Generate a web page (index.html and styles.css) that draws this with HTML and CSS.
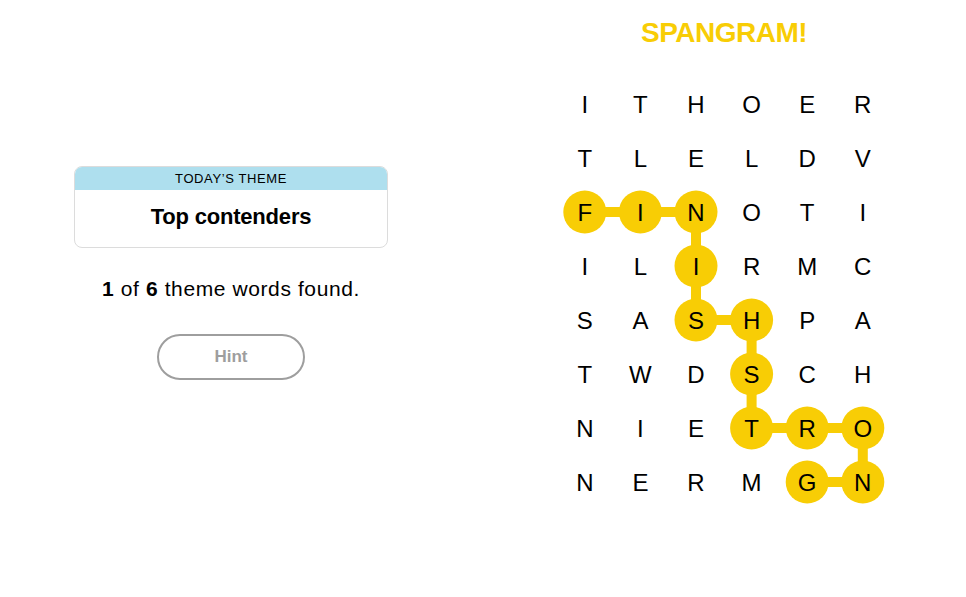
FILE: index.html
```html
<!DOCTYPE html>
<html>
<head>
<meta charset="utf-8">
<link rel="stylesheet" href="styles.css">
</head>
<body>
<div class="page">
  <section class="left">
    <div class="theme-card">
      <div class="theme-head">TODAY’S THEME</div>
      <div class="theme-body">Top contenders</div>
    </div>
    <p class="progress"><b>1</b> of <b>6</b> theme words found.</p>
    <button class="hint">Hint</button>
  </section>
  <section class="right">
    <div class="banner">SPANGRAM!</div>
    <div class="board">
      <svg class="paths" width="334" height="432" viewBox="0 0 334 432">
        <g stroke="#f8cd05" stroke-width="10" fill="none" stroke-linejoin="round">
          <polyline points="27.8,135 83.4,135 139,135 139,189 139,243 194.6,243 194.6,297 194.6,351 250.2,351 305.8,351 305.8,405 250.2,405"/>
        </g>
        <g fill="#f8cd05">
          <circle cx="27.8" cy="135" r="21.5"/>
          <circle cx="83.4" cy="135" r="21.5"/>
          <circle cx="139" cy="135" r="21.5"/>
          <circle cx="139" cy="189" r="21.5"/>
          <circle cx="139" cy="243" r="21.5"/>
          <circle cx="194.6" cy="243" r="21.5"/>
          <circle cx="194.6" cy="297" r="21.5"/>
          <circle cx="194.6" cy="351" r="21.5"/>
          <circle cx="250.2" cy="351" r="21.5"/>
          <circle cx="305.8" cy="351" r="21.5"/>
          <circle cx="305.8" cy="405" r="21.5"/>
          <circle cx="250.2" cy="405" r="21.5"/>
        </g>
      </svg>
      <div class="grid">
        <span>I</span><span>T</span><span>H</span><span>O</span><span>E</span><span>R</span>
        <span>T</span><span>L</span><span>E</span><span>L</span><span>D</span><span>V</span>
        <span>F</span><span>I</span><span>N</span><span>O</span><span>T</span><span>I</span>
        <span>I</span><span>L</span><span>I</span><span>R</span><span>M</span><span>C</span>
        <span>S</span><span>A</span><span>S</span><span>H</span><span>P</span><span>A</span>
        <span>T</span><span>W</span><span>D</span><span>S</span><span>C</span><span>H</span>
        <span>N</span><span>I</span><span>E</span><span>T</span><span>R</span><span>O</span>
        <span>N</span><span>E</span><span>R</span><span>M</span><span>G</span><span>N</span>
      </div>
    </div>
  </section>
</div>
</body>
</html>
```

FILE: styles.css
```css
* { box-sizing: border-box; }
html, body { margin: 0; padding: 0; background: #fff; }
body {
  font-family: "Liberation Sans", Arial, sans-serif;
  color: #000;
  width: 966px;
  height: 597px;
  overflow: hidden;
}
.page {
  display: flex;
  align-items: flex-start;
}
.left {
  width: 314px;
  margin-left: 74px;
  margin-top: 166px;
  display: flex;
  flex-direction: column;
  align-items: center;
}
.theme-card {
  width: 314px;
  border: 1px solid #dcdcdc;
  border-radius: 8px;
  overflow: hidden;
}
.theme-head {
  background: #aedfee;
  height: 23px;
  line-height: 24px;
  text-align: center;
  font-size: 13px;
  letter-spacing: 0.6px;
  font-weight: 500;
}
.theme-body {
  height: 57px;
  line-height: 53px;
  text-align: center;
  font-size: 22px;
  font-weight: 700;
  letter-spacing: -0.2px;
}
.progress {
  margin: 27px 0 0;
  font-size: 21px;
  line-height: 28px;
  letter-spacing: 0.6px;
}
.hint {
  margin-top: 31px;
  width: 148px;
  height: 46px;
  border: 2px solid #9e9e9e;
  border-radius: 23px;
  background: #fff;
  color: #9e9e9e;
  font-family: "Liberation Sans", Arial, sans-serif;
  font-weight: 700;
  font-size: 17px;
}
.right {
  margin-left: 169px;
  width: 334px;
  display: flex;
  flex-direction: column;
  align-items: center;
}
.banner {
  margin-top: 16px;
  height: 34px;
  line-height: 34px;
  color: #f8cd05;
  font-family: "Liberation Sans Narrow", "Liberation Sans", Arial, sans-serif;
  font-weight: 700;
  font-size: 28px;
  letter-spacing: -0.5px;
}
.board {
  position: relative;
  margin-top: 27px;
  width: 334px;
  height: 432px;
}
.paths {
  position: absolute;
  left: 0;
  top: 0;
}
.grid {
  position: relative;
  display: grid;
  grid-template-columns: repeat(6, 55.6px);
  grid-template-rows: repeat(8, 54px);
  padding-top: 1px;
}
.grid span {
  display: flex;
  align-items: center;
  justify-content: center;
  font-size: 24px;
  line-height: 1;
}
```
